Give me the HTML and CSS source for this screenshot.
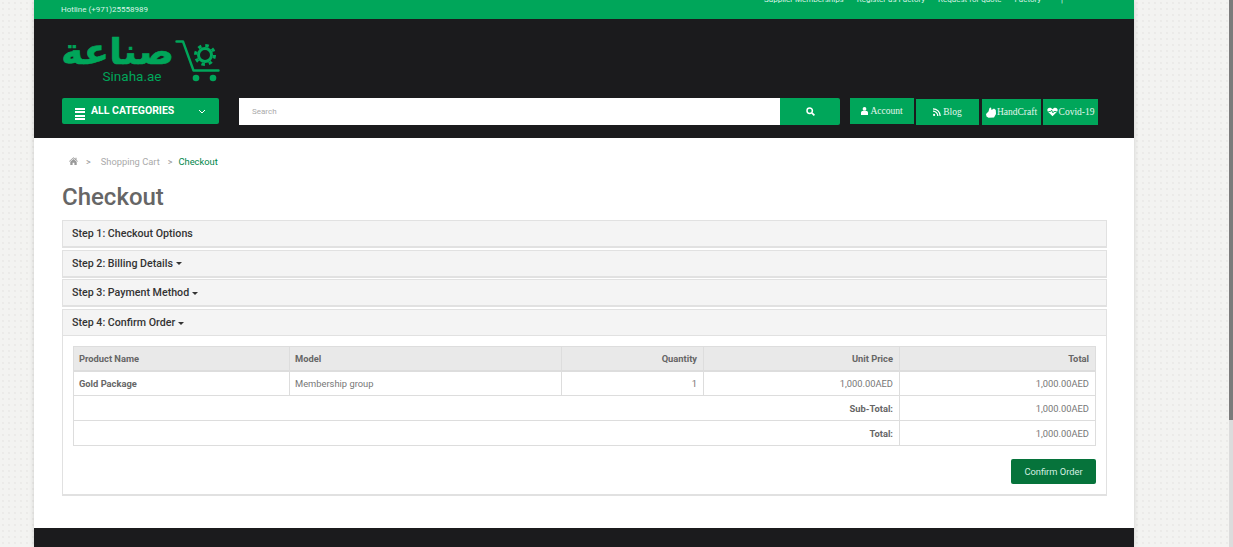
FILE: index.html
```html
<!DOCTYPE html>
<html lang="en">
  <head>
    <meta charset="UTF-8" />
    <title>Checkout</title>
    <link rel="stylesheet" href="styles.css">
  </head>
  <body>
    <div class="wrapper">
      <!-- Top bar -->
      <div class="topbar">
        <span class="hotline">Hotline (+971)25558989</span>
        <ul class="toplinks">
          <li>Supplier Memberships</li>
          <li>Register as Factory</li>
          <li>Request for quote</li>
          <li>Factory</li>
          <li class="toplinks-sep">|</li>
        </ul>
      </div>

      <!-- Header -->
      <header class="header">
        <div class="logo">
          <div class="logo-words">
            <span class="logo-ar" lang="ar" dir="rtl">صناعة</span>
            <span class="logo-en">Sinaha.ae</span>
          </div>
          <svg class="logo-cart" width="46" height="44" viewBox="0 0 46 44">
            <path d="M1.500 2.500h6.500l10.500 29h25" fill="none" stroke="#00a65a" stroke-width="2.400" stroke-linecap="round" stroke-linejoin="round" />
            <circle cx="21" cy="39" r="3.300" fill="#00a65a" />
            <circle cx="38" cy="39" r="3.300" fill="#00a65a" />
            <circle cx="30" cy="16" r="6.500" fill="none" stroke="#00a65a" stroke-width="3" />
            <circle cx="30" cy="16" r="9.500" fill="none" stroke="#00a65a" stroke-width="3" stroke-dasharray="3.500 3.960" />
          </svg>
        </div>
        <div class="navrow">
          <div class="categories">
            <span class="burger"><i></i><i></i><i></i><i></i></span>
            <span class="cat-label">ALL CATEGORIES</span>
            <svg class="chev" width="8" height="5" viewBox="0 0 8 5"><path d="M1 1l3 3 3-3" fill="none" stroke="#fff" stroke-width="1" /></svg>
          </div>
          <div class="search">
            <span class="search-input">Search</span>
            <span class="search-btn">
              <svg width="9" height="9" viewBox="0 0 9 9"><circle cx="3.700" cy="3.700" r="2.700" fill="none" stroke="#fff" stroke-width="1.500" /><path d="M5.800 5.800L8.400 8.400" stroke="#fff" stroke-width="1.700" /></svg>
            </span>
          </div>
          <nav class="menu">
            <a class="menu-item item-account">
              <svg width="7" height="8" viewBox="0 0 7 8"><circle cx="3.500" cy="1.900" r="1.900" fill="#fff" /><path d="M0 8V5.600C0 4.500.8 3.900 1.600 3.900h3.800C6.200 3.900 7 4.500 7 5.600V8z" fill="#fff" /></svg>
              Account
            </a>
            <a class="menu-item item-blog">
              <svg width="8" height="8" viewBox="0 0 8 8"><circle cx="1.100" cy="6.900" r="1.100" fill="#fff" /><path d="M0 3.200a4.800 4.800 0 0 1 4.800 4.800M0 .8A7.200 7.200 0 0 1 7.200 8" fill="none" stroke="#fff" stroke-width="1.300" /></svg>
              Blog
            </a>
            <a class="menu-item item-hand">
              <svg width="10" height="11" viewBox="0 0 10 11"><path d="M0 7L2.500 4.500 3.500 1 5 .5 5.500 3 8 1.500 9.800 3 10 7 8 10.500 2.500 10.800 .5 9.500z" fill="#fff" /></svg>
              HandCraft
            </a>
            <a class="menu-item item-covid">
              <svg width="11" height="10" viewBox="0 0 12 10"><path d="M6 9.600L1 4.600C-.4 2.800.6.4 3 .4c1.300 0 2.300.7 3 1.600C6.700 1.100 7.700.4 9 .4c2.400 0 3.400 2.400 2 4.200z" fill="#fff" /><path d="M1.500 4.500h2.500l1-1.500 1.500 3 1-1.500h3" fill="none" stroke="#00a65a" stroke-width="1" /></svg>
              Covid-19
            </a>
          </nav>
        </div>
      </header>

      <!-- Content -->
      <main class="content">
        <ul class="breadcrumb">
          <li class="crumb-home">
            <svg width="9" height="8" viewBox="0 0 9 8"><path d="M4.500 .3L6.500 2.100V.8H7.500V3L9 4.300 8.500 4.800 4.500 1.300 .5 4.800 0 4.300z" fill="#999" /><path d="M1.300 4.800L4.500 2 7.700 4.800V8H5.400V5.700H3.600V8H1.300z" fill="#999" /></svg>
          </li>
          <li class="crumb-sep crumb-sep-first">&gt;</li>
          <li class="crumb-link">Shopping Cart</li>
          <li class="crumb-sep">&gt;</li>
          <li class="crumb-current">Checkout</li>
        </ul>

        <h1>Checkout</h1>

        <div class="panel"><div class="panel-heading">Step 1: Checkout Options</div></div>
        <div class="panel"><div class="panel-heading">Step 2: Billing Details <b class="caret"></b></div></div>
        <div class="panel"><div class="panel-heading">Step 3: Payment Method <b class="caret"></b></div></div>
        <div class="panel">
          <div class="panel-heading">Step 4: Confirm Order <b class="caret"></b></div>
          <div class="panel-body">
            <table class="order">
              <thead>
                <tr>
                  <th class="col-name">Product Name</th>
                  <th class="col-model">Model</th>
                  <th class="col-qty right">Quantity</th>
                  <th class="col-price right">Unit Price</th>
                  <th class="right">Total</th>
                </tr>
              </thead>
              <tbody>
                <tr>
                  <td class="strong">Gold Package</td>
                  <td>Membership group</td>
                  <td class="right">1</td>
                  <td class="right">1,000.00AED</td>
                  <td class="right">1,000.00AED</td>
                </tr>
              </tbody>
              <tfoot>
                <tr>
                  <td colspan="4" class="right strong">Sub-Total:</td>
                  <td class="right">1,000.00AED</td>
                </tr>
                <tr>
                  <td colspan="4" class="right strong">Total:</td>
                  <td class="right">1,000.00AED</td>
                </tr>
              </tfoot>
            </table>
            <div class="buttons">
              <a class="btn-confirm">Confirm Order</a>
            </div>
          </div>
        </div>
      </main>

      <footer class="footer"></footer>
    </div>
    <div class="scrollbar"><div class="scrollbar-thumb"></div></div>
  </body>
</html>
```

FILE: styles.css
```css
* {
  margin: 0;
  padding: 0;
  box-sizing: border-box;
}

html,
body {
  height: 100%;
  overflow: hidden;
}

body {
  font-family: Roboto, Arial, sans-serif;
  font-size: 9.33px;
  color: #666;
  background-color: #f3f3f1;
  background-image: radial-gradient(#ebeae8 0.7px, transparent 0.9px);
  background-size: 6px 6px;
}

ul {
  list-style: none;
}

.wrapper {
  width: 1100px;
  height: 547px;
  margin-left: 34px;
  background: #fff;
  box-shadow: 0 0 5px rgba(0, 0, 0, 0.15);
  display: flex;
  flex-direction: column;
  overflow: hidden;
}

/* Top bar */
.topbar {
  height: 19px;
  flex: none;
  background: #00a65a;
  color: #d9f3e6;
  padding: 0 0 0 27px;
  display: flex;
  justify-content: space-between;
  font-size: 8px;
}

.hotline {
  padding-top: 5px;
}

.toplinks {
  display: flex;
  gap: 13px;
  margin-top: -5px;
  padding-right: 71px;
  line-height: 10px;
}

.toplinks-sep {
  margin-left: 7px;
}

/* Header */
.header {
  height: 119px;
  flex: none;
  background: #1b1b1d;
  padding: 15px 36px 0 28px;
}

.logo {
  height: 64px;
  display: flex;
  align-items: flex-start;
}

.logo-words {
  width: 112px;
  display: flex;
  flex-direction: column;
  align-items: center;
}

.logo-ar {
  font-family: "DejaVu Sans", sans-serif;
  font-weight: bold;
  font-size: 36px;
  line-height: 34px;
  color: #00a65a;
  -webkit-text-stroke: 0.6px #00a65a;
  transform: scaleX(1.03);
  margin-top: 1px;
}

.logo-en {
  font-size: 13.5px;
  line-height: 16px;
  color: #00a65a;
  margin-left: 28px;
  margin-top: -1px;
}

.logo-cart {
  margin-left: 1px;
  margin-top: 5px;
}

.navrow {
  display: flex;
  align-items: flex-start;
}

.categories {
  width: 157px;
  height: 26px;
  background: #00a65a;
  border-radius: 2px;
  color: #fff;
  display: flex;
  align-items: center;
  padding-left: 13px;
  flex: none;
}

.burger {
  width: 10px;
  display: flex;
  flex-direction: column;
  gap: 1.5px;
  margin-top: 6px;
}

.burger i {
  display: block;
  height: 2px;
  background: #fff;
}

.cat-label {
  font-size: 10.5px;
  font-weight: 700;
  margin-left: 6px;
  margin-top: -1px;
}

.chev {
  margin-left: 24px;
}

.search {
  width: 601px;
  height: 27px;
  margin-left: 20px;
  display: flex;
  flex: none;
}

.search-input {
  flex: 1;
  background: #fff;
  color: #aaa;
  font-size: 8px;
  padding: 9px 0 0 13px;
}

.search-btn {
  width: 60px;
  background: #00a65a;
  border-radius: 0 2px 2px 0;
  display: flex;
  align-items: center;
  justify-content: center;
}

.menu {
  display: flex;
  margin-left: 10px;
  font-family: "Liberation Serif", serif;
  font-size: 9.5px;
  color: #e6f6ee;
}

.menu-item {
  height: 26px;
  background: #00a65a;
  display: flex;
  align-items: center;
  justify-content: center;
  gap: 2px;
  margin-top: 1px;
}

.item-account {
  width: 64px;
  margin-top: 0;
}

.item-blog {
  width: 63px;
  margin-left: 2px;
}

.item-hand {
  width: 59px;
  margin-left: 3px;
  gap: 1px;
}

.item-covid {
  width: 55px;
  margin-left: 2px;
  gap: 1px;
}

/* Content */
.content {
  flex: 1;
  padding: 17px 27px 0 28px;
}

.breadcrumb {
  display: flex;
  align-items: center;
  height: 13px;
  padding-left: 7px;
}

.crumb-sep {
  color: #999;
  font-size: 9px;
  margin: 0 6px 0 8px;
}

.crumb-sep-first {
  margin-right: 10px;
}

.crumb-link {
  color: #aaa;
}

.crumb-current {
  color: #00864a;
}

h1 {
  font-size: 24px;
  font-weight: 500;
  color: #666;
  line-height: 30px;
  margin-top: 14px;
  margin-bottom: 8px;
}

.panel {
  border: 1px solid #e1e1e1;
  border-bottom-width: 2px;
  margin-bottom: 1.7px;
}

.panel-heading {
  height: 25px;
  background: #f4f4f4;
  color: #333;
  font-size: 10.67px;
  font-weight: 500;
  line-height: 25px;
  padding-left: 9px;
}

.caret {
  display: inline-block;
  border-top: 3.5px solid #333;
  border-left: 3.5px solid transparent;
  border-right: 3.5px solid transparent;
  vertical-align: middle;
}

.panel-body {
  border-top: 1px solid #e1e1e1;
  padding: 10px;
}

.order {
  width: 100%;
  border-collapse: collapse;
  table-layout: fixed;
  border: 1px solid #ddd;
}

.order th,
.order td {
  border: 1px solid #ddd;
  padding: 0 6px 0 5px;
  height: 25px;
  text-align: left;
  color: #777;
}

.order th {
  height: 24px;
  background: #e9e9e9;
  border-bottom-width: 2px;
  color: #666;
  font-weight: 700;
}

.order .right {
  text-align: right;
}

.order .strong {
  font-weight: 700;
  color: #666;
}

.col-name {
  width: 216px;
}

.col-model {
  width: 272px;
}

.col-qty {
  width: 142px;
}

.col-price {
  width: 196px;
}

.buttons {
  display: flex;
  justify-content: flex-end;
  margin-top: 13px;
}

.btn-confirm {
  width: 85px;
  height: 25px;
  background: #06733b;
  border-radius: 2px;
  color: #d5efe2;
  text-align: center;
  line-height: 25px;
}

/* Footer */
.footer {
  height: 19px;
  flex: none;
  background: #1b1b1d;
}

/* Scrollbar strip from the screenshot */
.scrollbar {
  position: fixed;
  top: 0;
  right: 0;
  width: 4px;
  height: 100%;
  background: #dcdcdc;
}

.scrollbar-thumb {
  height: 420px;
  background: #7b7b7b;
}
```
